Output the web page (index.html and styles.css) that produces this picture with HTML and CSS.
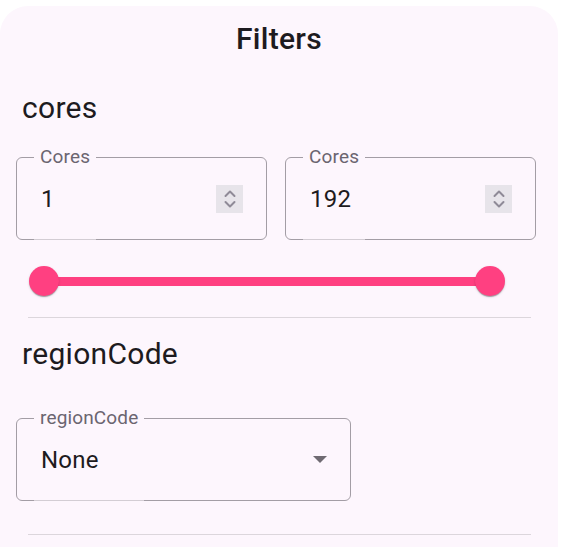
FILE: index.html
```html
<!DOCTYPE html>
<html lang="en">
<head>
<meta charset="utf-8">
<title>Filters</title>
<link rel="stylesheet" href="styles.css">
</head>
<body>
<div class="card">
  <h1 class="title">Filters</h1>
  <section class="group">
    <h2 class="group-title">cores</h2>
    <div class="range-fields">
      <div class="field">
        <span class="field-label">Cores</span>
        <span class="field-value">1</span>
        <span class="spinner">
          <svg width="12" height="20" viewBox="0 0 12 20"><path d="M1.5 7 L6 2.5 L10.5 7 M1.5 13 L6 17.5 L10.5 13" fill="none" stroke="#8f8a97" stroke-width="2" stroke-linecap="round" stroke-linejoin="round"/></svg>
        </span>
      </div>
      <div class="field">
        <span class="field-label">Cores</span>
        <span class="field-value">192</span>
        <span class="spinner">
          <svg width="12" height="20" viewBox="0 0 12 20"><path d="M1.5 7 L6 2.5 L10.5 7 M1.5 13 L6 17.5 L10.5 13" fill="none" stroke="#8f8a97" stroke-width="2" stroke-linecap="round" stroke-linejoin="round"/></svg>
        </span>
      </div>
    </div>
    <div class="slider">
      <div class="track"></div>
      <span class="thumb thumb-start"></span>
      <span class="thumb thumb-end"></span>
    </div>
    <hr class="divider divider-first">
  </section>
  <section class="group">
    <h2 class="group-title group-title-second">regionCode</h2>
    <div class="field field-select">
      <span class="field-label field-label-wide">regionCode</span>
      <span class="field-value">None</span>
      <svg class="caret" width="14" height="7" viewBox="0 0 14 7"><path d="M0 0 L14 0 L7 7 Z" fill="#6f6a72"/></svg>
    </div>
    <hr class="divider divider-second">
  </section>
</div>
</body>
</html>
```

FILE: styles.css
```css
* { box-sizing: border-box; }

html, body {
  margin: 0;
  padding: 0;
  background: #ffffff;
}

body {
  font-family: Roboto, "Noto Sans", "Liberation Sans", sans-serif;
  color: #1d1b20;
  overflow: hidden;
}

.card {
  margin-top: 6px;
  width: 558px;
  height: 560px;
  background: #fdf6fd;
  border-radius: 28px 28px 0 0;
  padding-top: 15px;
}

.title {
  margin: 0;
  font-size: 30px;
  line-height: 36px;
  font-weight: 500;
  text-align: center;
  letter-spacing: 0.3px;
}

.group {
  padding: 0 16px;
}

.group-title {
  margin: 33px 0 0 0;
  padding-left: 6px;
  font-size: 30px;
  line-height: 36px;
  font-weight: 400;
  letter-spacing: 0.3px;
}

.group-title-second {
  margin-top: 18px;
}

.range-fields {
  display: grid;
  grid-template-columns: 251px 251px;
  column-gap: 18px;
  margin-top: 31px;
}

.field {
  position: relative;
  height: 83px;
  border: 1px solid #a39da5;
  border-radius: 6px;
  display: flex;
  align-items: center;
  padding: 0 23px 0 24px;
}

.field-label {
  position: absolute;
  top: -11px;
  left: 17px;
  padding: 0 6px;
  background: #fdf6fd;
  font-size: 19px;
  line-height: 20px;
  letter-spacing: 0.15px;
  color: #6b6570;
}

.field-label::after {
  content: "";
  position: absolute;
  left: 0;
  right: 0;
  top: 92px;
  height: 1px;
  background: #d3cdd4;
}

.field-value {
  flex: 1;
  font-size: 24px;
  line-height: 28px;
  letter-spacing: 0.25px;
  color: #1d1b20;
}

.spinner {
  width: 27px;
  height: 28px;
  background: #e7e4ea;
  display: flex;
  align-items: center;
  justify-content: center;
}

.slider {
  position: relative;
  margin: 26px 0 0 13px;
  width: 476px;
  height: 30px;
  padding: 10.5px 15px;
}

.track {
  height: 9px;
  background: #ff4081;
}

.thumb {
  position: absolute;
  top: 0;
  width: 30px;
  height: 30px;
  border-radius: 50%;
  background: #ff4081;
  box-shadow: 0 2px 1px -1px rgba(0,0,0,0.2), 0 1px 1px 0 rgba(0,0,0,0.14), 0 1px 3px 0 rgba(0,0,0,0.12);
}

.thumb-start { left: 0; }
.thumb-end { right: 0; }

.divider {
  margin: 21px 11px 0 12px;
  border: none;
  height: 1px;
  background: #dcd6dc;
}

.field-select {
  width: 335px;
  margin-top: 46px;
  padding-right: 23px;
}

.caret {
  display: block;
}

.divider-second {
  margin-top: 33px;
}
```
